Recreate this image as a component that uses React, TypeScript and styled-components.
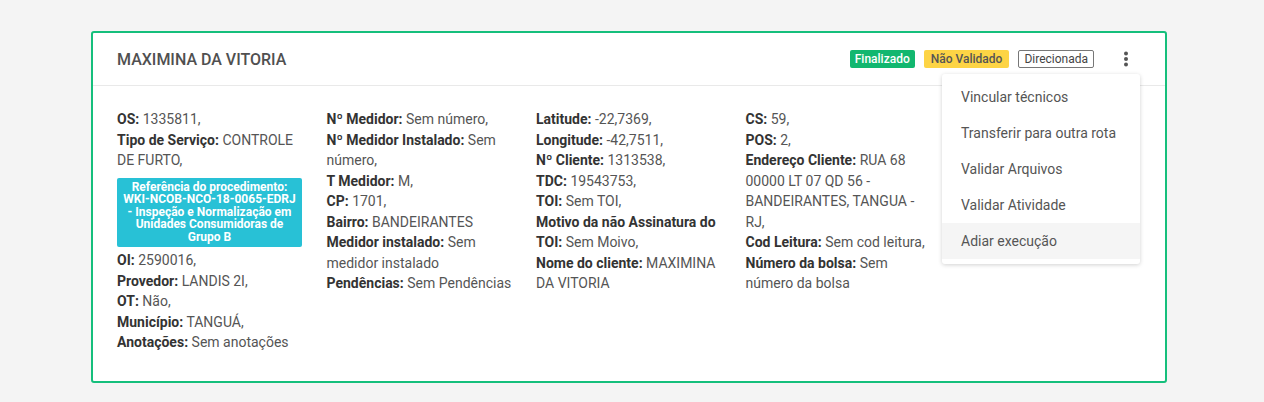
import React from 'react';
import styled, { createGlobalStyle } from 'styled-components';

const GlobalStyle = createGlobalStyle`
  body {
    margin: 0;
    background: #f4f4f4;
    font-family: Roboto, "Liberation Sans", sans-serif;
    color: #555;
  }
`;

const Page = styled.div`
  padding: 31px 0 0 91px;
  height: 402px;
  box-sizing: border-box;
`;

const Card = styled.div`
  width: 1076px;
  height: 352px;
  box-sizing: border-box;
  background: #fff;
  border: 2px solid #15bf7c;
  border-radius: 3px;
`;

const Header = styled.div`
  position: relative;
  height: 53px;
  box-sizing: border-box;
  border-bottom: 1px solid #e9e9e9;
  padding: 0 24px;
  display: flex;
  align-items: center;
  justify-content: space-between;
`;

const Title = styled.h2`
  margin: 0;
  font-size: 16px;
  font-weight: 500;
  color: #505050;
`;

const Actions = styled.div`
  display: flex;
  align-items: center;
  gap: 9px;
  padding-right: 7px;
`;

const badgeBg = { success: '#12b76f', warning: '#fdd445', outline: '#fff' };
const badgeColor = { success: '#fff', warning: '#555', outline: '#444' };
const badgePad = { success: '5px', warning: '7px', outline: '5px' };

const Badge = styled.span<{ $variant: 'success' | 'warning' | 'outline' }>`
  display: inline-block;
  height: 18px;
  padding: 0 ${p => badgePad[p.$variant]};
  border-radius: 2px;
  font-size: 12px;
  box-sizing: border-box;
  background: ${p => badgeBg[p.$variant]};
  color: ${p => badgeColor[p.$variant]};
  border: ${p => (p.$variant === 'outline' ? '1px solid #777' : 'none')};
  line-height: ${p => (p.$variant === 'outline' ? '16px' : '18px')};
  font-weight: ${p => (p.$variant === 'outline' ? 400 : 500)};
`;

const Kebab = styled.button`
  border: none;
  background: none;
  padding: 0;
  margin-left: 15px;
  width: 16px;
  height: 18px;
  display: flex;
  align-items: center;
  justify-content: center;
  color: #555;
`;

const Menu = styled.ul`
  position: absolute;
  top: 41px;
  right: 25px;
  width: 198px;
  margin: 0;
  padding: 5px 0;
  list-style: none;
  background: #fff;
  border-radius: 3px;
  box-shadow: 0 1px 4px rgba(0, 0, 0, 0.18);
  z-index: 2;
`;

const MenuItem = styled.li<{ $active?: boolean }>`
  height: 36px;
  line-height: 36px;
  padding-left: 19px;
  font-size: 14px;
  color: #555;
  background: ${p => (p.$active ? '#f5f5f5' : 'transparent')};
`;

const Body = styled.div`
  display: grid;
  grid-template-columns: repeat(4, 185px);
  column-gap: 24.5px;
  padding: 23px 24px 0;
`;

const Column = styled.div`
  font-size: 14px;
  line-height: 20.5px;
  color: #555;
`;

const Field = styled.div`
  b {
    font-weight: 700;
    color: #333;
  }
`;

const RefBox = styled.div`
  margin: 7px 0 3px;
  padding: 3px 4px 4px;
  background: #28c1d6;
  border-radius: 2px;
  color: #fff;
  font-size: 12px;
  font-weight: 700;
  line-height: 12.5px;
  text-align: center;
`;

const F = ({ k, v }: { k: string; v: string }) => (
  <Field>
    <b>{k}:</b> {v}
  </Field>
);

export default function App() {
  return (
    <Page>
      <GlobalStyle />
      <Card>
        <Header>
          <Title>MAXIMINA DA VITORIA</Title>
          <Actions>
            <Badge $variant="success">Finalizado</Badge>
            <Badge $variant="warning">Não Validado</Badge>
            <Badge $variant="outline">Direcionada</Badge>
            <Kebab>
              <svg width="6" height="16" viewBox="0 0 6 16">
                <circle cx="3" cy="2.5" r="2" fill="#555" />
                <circle cx="3" cy="8" r="2" fill="#555" />
                <circle cx="3" cy="13.5" r="2" fill="#555" />
              </svg>
            </Kebab>
          </Actions>
          <Menu>
            <MenuItem>Vincular técnicos</MenuItem>
            <MenuItem>Transferir para outra rota</MenuItem>
            <MenuItem>Validar Arquivos</MenuItem>
            <MenuItem>Validar Atividade</MenuItem>
            <MenuItem $active>Adiar execução</MenuItem>
          </Menu>
        </Header>
        <Body>
          <Column>
            <F k="OS" v="1335811," />
            <F k="Tipo de Serviço" v="CONTROLE DE FURTO," />
            <RefBox>
              Referência do procedimento: WKI-NCOB-NCO-18-0065-EDRJ - Inspeção e Normalização em Unidades Consumidoras de Grupo B
            </RefBox>
            <F k="OI" v="2590016," />
            <F k="Provedor" v="LANDIS 2I," />
            <F k="OT" v="Não," />
            <F k="Município" v="TANGUÁ," />
            <F k="Anotações" v="Sem anotações" />
          </Column>
          <Column>
            <F k="Nº Medidor" v="Sem número," />
            <F k="Nº Medidor Instalado" v="Sem número," />
            <F k="T Medidor" v="M," />
            <F k="CP" v="1701," />
            <F k="Bairro" v="BANDEIRANTES" />
            <F k="Medidor instalado" v="Sem medidor instalado" />
            <F k="Pendências" v="Sem Pendências" />
          </Column>
          <Column>
            <F k="Latitude" v="-22,7369," />
            <F k="Longitude" v="-42,7511," />
            <F k="Nº Cliente" v="1313538," />
            <F k="TDC" v="19543753," />
            <F k="TOI" v="Sem TOI," />
            <F k="Motivo da não Assinatura do TOI" v="Sem Moivo," />
            <F k="Nome do cliente" v="MAXIMINA DA VITORIA" />
          </Column>
          <Column>
            <F k="CS" v="59," />
            <F k="POS" v="2," />
            <F k="Endereço Cliente" v="RUA 68 00000 LT 07 QD 56 - BANDEIRANTES, TANGUA - RJ," />
            <F k="Cod Leitura" v="Sem cod leitura," />
            <F k="Número da bolsa" v="Sem número da bolsa" />
          </Column>
        </Body>
      </Card>
    </Page>
  );
}
